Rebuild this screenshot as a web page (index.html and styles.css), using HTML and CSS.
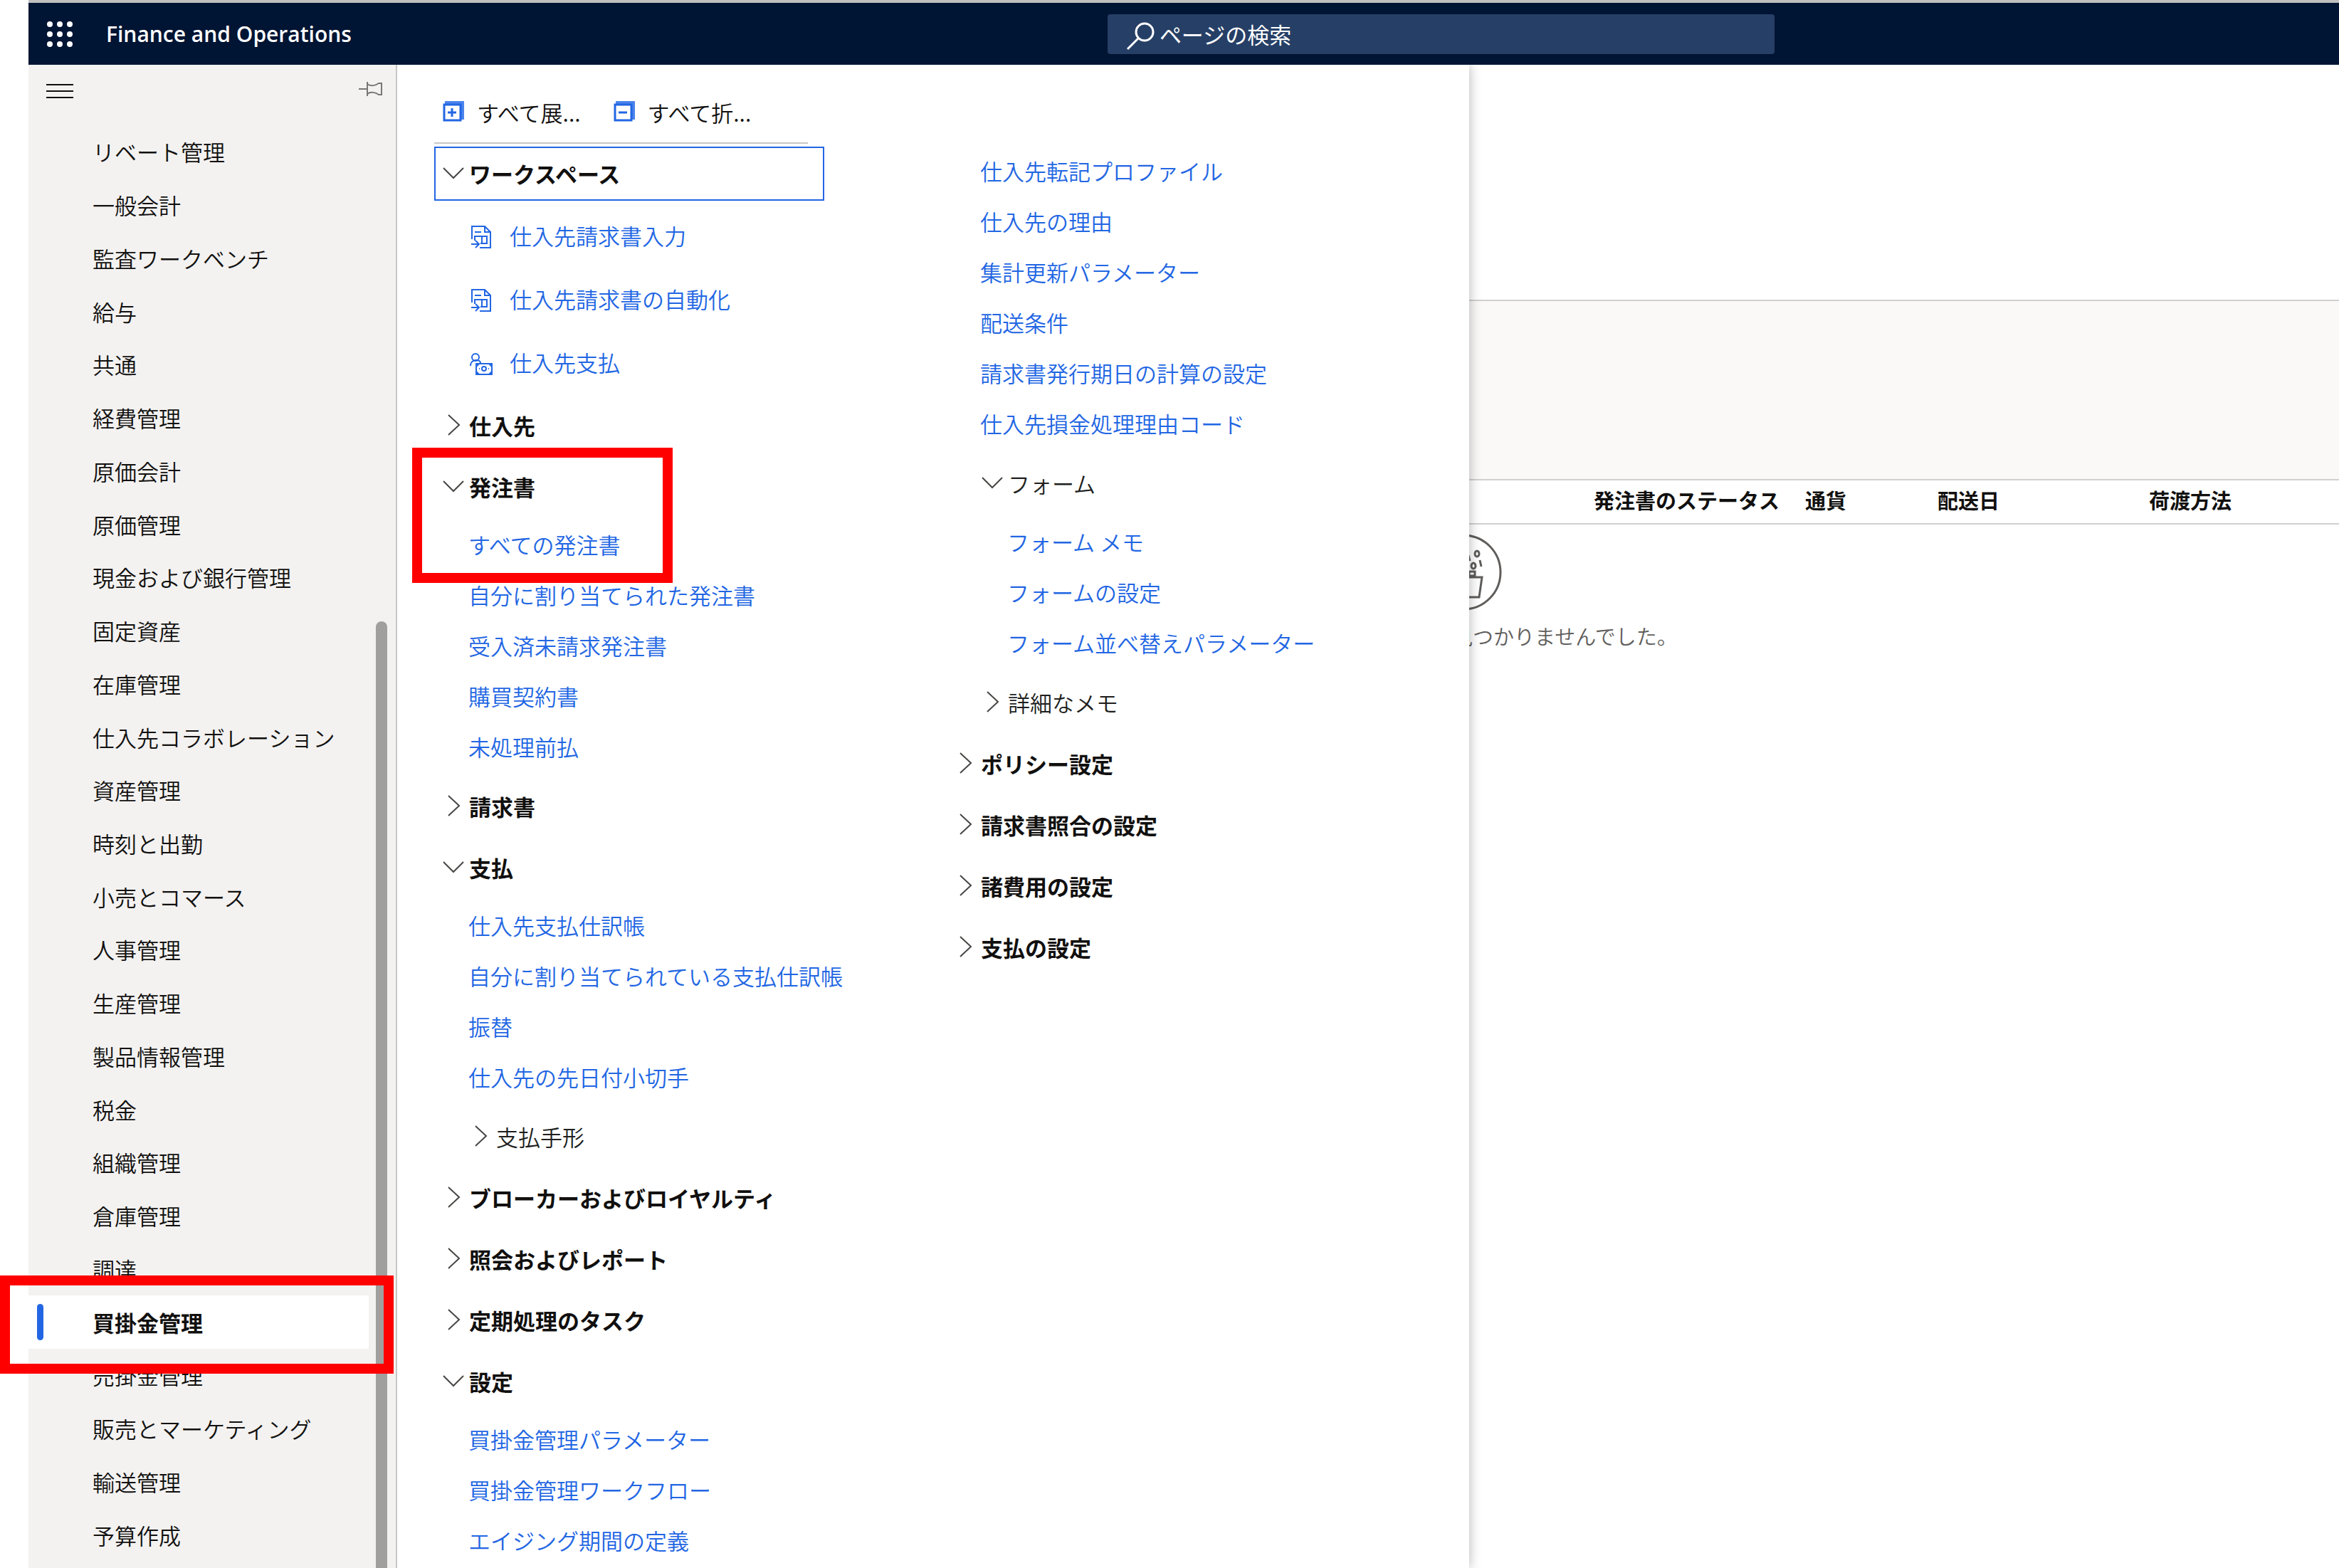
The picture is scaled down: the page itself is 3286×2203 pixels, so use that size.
FILE: index.html
```html
<!DOCTYPE html>
<html lang="ja">
<head>
<meta charset="utf-8">
<meta name="viewport" content="width=device-width, initial-scale=1">
<title>Finance and Operations</title>
<link rel="stylesheet" href="styles.css">
</head>
<body>
<svg class="sprite" aria-hidden="true">
  <symbol id="down" viewBox="0 0 32 32"><path d="M2 8 16 22 30 8"/></symbol>
  <symbol id="right" viewBox="0 0 32 32"><path d="M9 1 24 15 9 29"/></symbol>
  <symbol id="invoice" viewBox="0 0 30 34"><path d="M2 20V2H20L28 10V32H13M20 2V10H28M6 10H15M6 15V22M6 16H23V26H14M16 16V26M1 27H11M7 22 12 27 7 32"/></symbol>
  <symbol id="payment" viewBox="0 0 32 34"><circle cx="8" cy="8" r="5"/><path d="M1 20C1 10 15 10 15 16M9 17H31V32H9ZM9 21 13 17M27 17 31 21M9 28 13 32M27 32 31 28M13 24H14M26 24H27"/><circle cx="20" cy="24" r="3"/></symbol>
</svg>
<div class="app">
  <header class="topbar">
    <div class="brand">
      <button class="icon-button" aria-label="アプリ起動ツール">
        <svg class="waffle" viewBox="0 0 38 38"><g fill="currentColor"><circle cx="5" cy="5" r="4"/><circle cx="19" cy="5" r="4"/><circle cx="33" cy="5" r="4"/><circle cx="5" cy="19" r="4"/><circle cx="19" cy="19" r="4"/><circle cx="33" cy="19" r="4"/><circle cx="5" cy="33" r="4"/><circle cx="19" cy="33" r="4"/><circle cx="33" cy="33" r="4"/></g></svg>
      </button>
      <span class="product">Finance and Operations</span>
    </div>
    <label class="search">
      <svg class="search-icon" viewBox="0 0 40 40"><circle cx="26" cy="15" r="12"/><path d="M17 24 2 39"/></svg>
      <input type="text" placeholder="ページの検索" aria-label="ページの検索">
    </label>
  </header>
  <div class="workspace">
    <nav class="sidebar" aria-label="モジュール">
      <div class="sidebar-top">
        <button class="icon-button" aria-label="メニュー"><svg class="burger" viewBox="0 0 38 24"><path d="M0 3H38M0 12H38M0 21H38"/></svg></button>
        <button class="icon-button" aria-label="固定"><svg class="pin" viewBox="0 0 34 22"><path d="M0 11H12M12 1V21M12 4C17 8 24 6 28 3H32V19H28C24 16 17 14 12 18"/></svg></button>
      </div>
      <ul class="modules">
        <li><a href="#">リベート管理</a></li>
        <li><a href="#">一般会計</a></li>
        <li><a href="#">監査ワークベンチ</a></li>
        <li><a href="#">給与</a></li>
        <li><a href="#">共通</a></li>
        <li><a href="#">経費管理</a></li>
        <li><a href="#">原価会計</a></li>
        <li><a href="#">原価管理</a></li>
        <li><a href="#">現金および銀行管理</a></li>
        <li><a href="#">固定資産</a></li>
        <li><a href="#">在庫管理</a></li>
        <li><a href="#">仕入先コラボレーション</a></li>
        <li><a href="#">資産管理</a></li>
        <li><a href="#">時刻と出勤</a></li>
        <li><a href="#">小売とコマース</a></li>
        <li><a href="#">人事管理</a></li>
        <li><a href="#">生産管理</a></li>
        <li><a href="#">製品情報管理</a></li>
        <li><a href="#">税金</a></li>
        <li><a href="#">組織管理</a></li>
        <li><a href="#">倉庫管理</a></li>
        <li><a href="#">調達</a></li>
        <li class="selected"><a href="#" aria-current="page">買掛金管理</a><span class="callout callout-module"></span></li>
        <li><a href="#">売掛金管理</a></li>
        <li><a href="#">販売とマーケティング</a></li>
        <li><a href="#">輸送管理</a></li>
        <li><a href="#">予算作成</a></li>
      </ul>
      <span class="scroll-thumb"></span>
    </nav>
    <main class="content">
      <div class="page-head"></div>
      <div class="filter-band"></div>
      <table class="orders">
        <colgroup><col class="col-lead"><col class="col-wide"><col class="col-narrow"><col class="col-wide"><col></colgroup>
        <thead><tr><td></td><th scope="col">発注書のステータス</th><th scope="col">通貨</th><th scope="col">配送日</th><th scope="col">荷渡方法</th></tr></thead>
      </table>
      <div class="empty">
        <svg class="empty-icon" viewBox="0 0 108 108"><circle cx="54" cy="54" r="52"/><ellipse cx="73" cy="28" rx="3" ry="4"/><ellipse cx="68" cy="45" rx="3" ry="4"/><path d="M77 37 79 46M61 30 63 38M54 53H70V59H62M62 53V61M54 61H80L76 89H54"/></svg>
        <p class="empty-text">見つかりませんでした。</p>
      </div>

      <section class="menu" aria-label="買掛金管理">
        <div class="menu-tools">
          <button class="tool"><svg class="tool-icon" viewBox="0 0 30 30"><path class="stack" d="M3 1H30V27H3Z"/><path class="sheet" d="M2 6H25V28H2Z"/><path d="M13 11V23M7 17H19"/></svg>すべて展...</button>
          <button class="tool"><svg class="tool-icon" viewBox="0 0 30 30"><path class="stack" d="M3 1H30V27H3Z"/><path class="sheet" d="M2 6H25V28H2Z"/><path d="M7 17H19"/></svg>すべて折...</button>
        </div>
        <div class="menu-columns">
          <div class="menu-column">
            <button class="group focused" aria-expanded="true"><svg class="chevron"><use href="#down"/></svg>ワークスペース</button>
            <ul class="spaces">
              <li><a href="#"><svg class="space-icon"><use href="#invoice"/></svg>仕入先請求書入力</a></li>
              <li><a href="#"><svg class="space-icon"><use href="#invoice"/></svg>仕入先請求書の自動化</a></li>
              <li><a href="#"><svg class="space-icon"><use href="#payment"/></svg>仕入先支払</a></li>
            </ul>
            <button class="group" aria-expanded="false"><svg class="chevron"><use href="#right"/></svg>仕入先</button>
            <div class="marked">
              <button class="group" aria-expanded="true"><svg class="chevron"><use href="#down"/></svg>発注書</button>
              <ul class="links">
                <li><a href="#">すべての発注書</a></li>
                <li><a href="#">自分に割り当てられた発注書</a></li>
                <li><a href="#">受入済未請求発注書</a></li>
                <li><a href="#">購買契約書</a></li>
                <li><a href="#">未処理前払</a></li>
              </ul>
              <span class="callout callout-orders"></span>
            </div>
            <button class="group" aria-expanded="false"><svg class="chevron"><use href="#right"/></svg>請求書</button>
            <button class="group" aria-expanded="true"><svg class="chevron"><use href="#down"/></svg>支払</button>
            <ul class="links">
              <li><a href="#">仕入先支払仕訳帳</a></li>
              <li><a href="#">自分に割り当てられている支払仕訳帳</a></li>
              <li><a href="#">振替</a></li>
              <li><a href="#">仕入先の先日付小切手</a></li>
            </ul>
            <div class="nested"><button class="group" aria-expanded="false"><svg class="chevron"><use href="#right"/></svg>支払手形</button></div>
            <button class="group" aria-expanded="false"><svg class="chevron"><use href="#right"/></svg>ブローカーおよびロイヤルティ</button>
            <button class="group" aria-expanded="false"><svg class="chevron"><use href="#right"/></svg>照会およびレポート</button>
            <button class="group" aria-expanded="false"><svg class="chevron"><use href="#right"/></svg>定期処理のタスク</button>
            <button class="group" aria-expanded="true"><svg class="chevron"><use href="#down"/></svg>設定</button>
            <ul class="links">
              <li><a href="#">買掛金管理パラメーター</a></li>
              <li><a href="#">買掛金管理ワークフロー</a></li>
              <li><a href="#">エイジング期間の定義</a></li>
            </ul>
          </div>
          <div class="menu-column">
            <ul class="links">
              <li><a href="#">仕入先転記プロファイル</a></li>
              <li><a href="#">仕入先の理由</a></li>
              <li><a href="#">集計更新パラメーター</a></li>
              <li><a href="#">配送条件</a></li>
              <li><a href="#">請求書発行期日の計算の設定</a></li>
              <li><a href="#">仕入先損金処理理由コード</a></li>
            </ul>
            <div class="nested">
              <button class="group" aria-expanded="true"><svg class="chevron"><use href="#down"/></svg>フォーム</button>
              <ul class="links">
                <li><a href="#">フォーム メモ</a></li>
                <li><a href="#">フォームの設定</a></li>
                <li><a href="#">フォーム並べ替えパラメーター</a></li>
              </ul>
              <button class="group" aria-expanded="false"><svg class="chevron"><use href="#right"/></svg>詳細なメモ</button>
            </div>
            <button class="group" aria-expanded="false"><svg class="chevron"><use href="#right"/></svg>ポリシー設定</button>
            <button class="group" aria-expanded="false"><svg class="chevron"><use href="#right"/></svg>請求書照合の設定</button>
            <button class="group" aria-expanded="false"><svg class="chevron"><use href="#right"/></svg>諸費用の設定</button>
            <button class="group" aria-expanded="false"><svg class="chevron"><use href="#right"/></svg>支払の設定</button>
          </div>
        </div>
      </section>
    </main>
  </div>
</div>
</body>
</html>
```

FILE: styles.css
```css
* { box-sizing: border-box; }

body {
  margin: 0;
  background: #fff;
  color: #11100f;
  font-family: "Noto Sans CJK JP", sans-serif;
  font-size: 31px;
  font-weight: 350;
  line-height: 48px;
}

ul { list-style: none; margin: 0; padding: 0; }
a { color: inherit; text-decoration: none; }
button { border: 0; padding: 0; background: none; color: inherit; font: inherit; cursor: pointer; }
svg { display: block; flex: none; fill: none; stroke: currentColor; stroke-width: 2; }
.sprite { display: none; }

.app {
  display: flex;
  flex-direction: column;
  height: 100vh;
  margin-left: 40px;
  border-top: 4px solid #bfbfbf;
}

/* Top bar */
.topbar {
  display: flex;
  align-items: center;
  flex: none;
  height: 87px;
  background: #001433;
  color: #fff;
}
.brand { display: flex; align-items: center; gap: 46px; width: 46.7%; padding-left: 25px; }
.waffle { width: 38px; height: 38px; stroke: none; }
.product { font-family: "Open Sans", sans-serif; font-size: 30px; font-weight: 600; }
.search {
  display: flex;
  align-items: center;
  gap: 7px;
  width: 937px;
  height: 56px;
  padding: 0 26px;
  border-radius: 4px;
  background: #263f66;
}
.search-icon { width: 40px; height: 40px; margin-top: 4px; stroke-width: 3; }
.search input {
  flex: 1;
  min-width: 0;
  padding: 0;
  border: 0;
  outline: 0;
  background: none;
  color: #fff;
  font: inherit;
  font-weight: 400;
}
.search input::placeholder { color: #fff; opacity: 1; }

/* Module list */
.workspace { display: flex; flex: 1; min-height: 0; }
.sidebar {
  position: relative;
  z-index: 2;
  display: flex;
  flex-direction: column;
  flex: none;
  width: 518px;
  padding-bottom: 9px;
  border-right: 2px solid #c8c6c4;
  background: #f3f2f1;
}
.sidebar-top {
  display: flex;
  justify-content: space-between;
  align-items: flex-start;
  height: 85px;
  padding: 23px 18px 0 25px;
}
.burger { width: 38px; height: 24px; margin-top: 2px; }
.pin { width: 34px; height: 22px; color: #797775; }
.modules { display: grid; grid-auto-rows: 1fr; flex: 1; min-height: 0; margin-right: 38px; }
.modules li { position: relative; display: flex; align-items: center; padding-left: 90px; }
.modules .selected { background: #fff; font-weight: 700; }
.selected::before {
  content: "";
  position: absolute;
  left: 12px;
  top: 12px;
  bottom: 12px;
  width: 9px;
  border-radius: 5px;
  background: #2266e3;
}
.scroll-thumb {
  position: absolute;
  right: 12px;
  top: 782px;
  bottom: 0;
  width: 16px;
  border-radius: 8px 8px 0 0;
  background: #a19f9d;
}

/* Highlight frames */
.callout { position: absolute; z-index: 3; border: 14px solid #f00; pointer-events: none; }
.callout-module { left: -40px; right: -35px; top: -28px; bottom: -35px; }
.callout-orders { left: -31px; top: -12px; width: 366px; height: 190px; }

/* Page behind the menu */
.content { position: relative; flex: 1; min-width: 0; overflow: hidden; }
.page-head { height: 330px; }
.filter-band { height: 252px; border-top: 2px solid #d2d0ce; background: #faf9f8; }
.orders {
  width: 100%;
  table-layout: fixed;
  border-collapse: collapse;
  font-size: 29px;
}
.orders tr { height: 62px; border: solid #d2d0ce; border-width: 2px 0; }
.orders th { padding: 0 0 6px; text-align: left; font-weight: 700; white-space: nowrap; }
.col-lead { width: 1681px; }
.col-wide { width: 297px; }
.col-narrow { width: 186px; }
.empty { padding: 13px 0 0 1444px; color: #605e5c; font-size: 29px; }
.empty-icon { width: 108px; height: 108px; stroke-width: 3; }
.empty-text { margin: 11px 0 0 38px; }

/* Fly-out menu */
.menu {
  position: absolute;
  inset: 0 auto 0 0;
  width: 1506px;
  max-width: 100%;
  padding-left: 52px;
  overflow: hidden;
  background: #fff;
  box-shadow: 0 0 16px rgba(0, 0, 0, 0.3);
}
.menu-tools {
  display: flex;
  align-items: flex-end;
  gap: 46px;
  width: 525px;
  height: 111px;
  padding: 0 0 18px 12px;
  border-bottom: 2px solid #c8c6c4;
}
.tool { display: flex; align-items: center; gap: 18px; white-space: nowrap; }
.tool-icon { width: 30px; height: 30px; margin-bottom: 4px; color: #2266e3; stroke-width: 3; }
.stack { fill: #4b84ec; stroke: none; }
.sheet { fill: #fff; }
.menu-columns { display: grid; grid-template-columns: 719px 1fr; }
.menu-column { display: flex; flex-direction: column; align-items: flex-start; }
.group {
  display: flex;
  align-items: center;
  gap: 6px;
  width: 548px;
  height: 76px;
  margin: 5px 0;
  padding: 0 9px;
  border: 2px solid transparent;
  font-weight: 700;
  white-space: nowrap;
}
.focused { margin: 4px 0; border-color: #2266e3; }
.chevron { width: 32px; height: 32px; color: #484644; }
.spaces { padding: 0 0 2px 50px; }
.spaces a { display: flex; align-items: center; gap: 24px; height: 89px; color: #2266e3; }
.space-icon { width: 32px; height: 34px; margin-top: 4px; }
.links { padding: 3px 0 5px 48px; }
.links a { display: block; padding: 11px 0 12px; color: #2266e3; white-space: nowrap; }
.marked { position: relative; }
.nested { margin-left: 38px; }
.nested .group { font-weight: 350; color: #201f1e; }
.nested .links { padding-top: 4px; }
```
